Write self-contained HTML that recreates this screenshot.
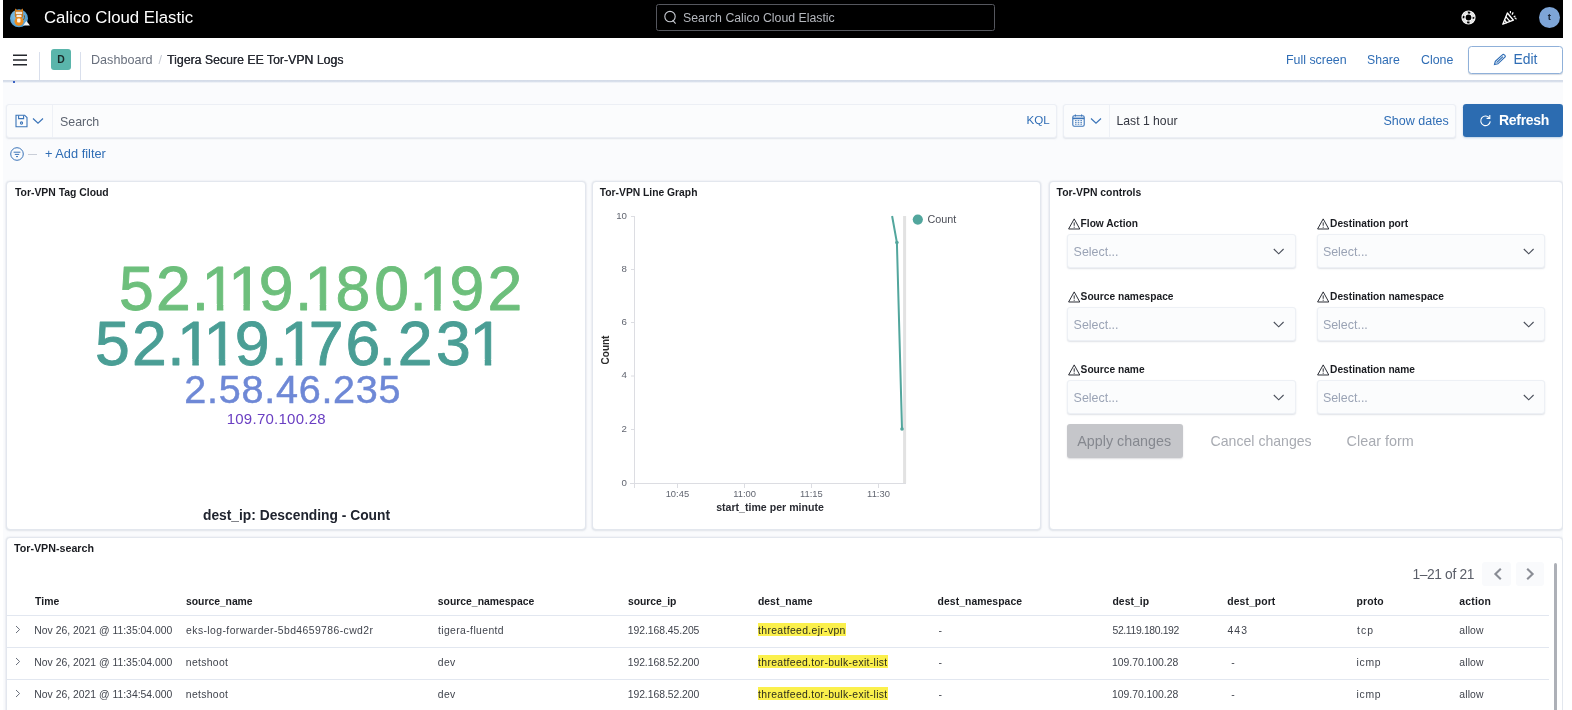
<!DOCTYPE html>
<html><head><meta charset="utf-8"><title>Tigera Secure EE Tor-VPN Logs</title>
<style>
*{box-sizing:border-box;margin:0;padding:0}
html,body{width:1572px;height:710px;overflow:hidden;background:#fff;font-family:"Liberation Sans",sans-serif;color:#343741}
#app{position:absolute;left:3px;top:0;width:1560px;height:710px;background:#fafbfd;overflow:hidden;will-change:transform}
.abs{position:absolute;white-space:nowrap;line-height:1}
.t{position:absolute;white-space:nowrap;line-height:1;transform:translateY(-50%)}
#top{position:absolute;left:0;top:0;width:1560px;height:38.5px;background:#000}
#bar2{position:absolute;left:0;top:38px;width:1560px;height:41.5px;background:#fff}
#band{position:absolute;left:0;top:79.5px;width:1560px;height:3.6px;background:linear-gradient(#d2dae7 0%,#d9e0ec 55%,#fafbfd 100%)}
.link{color:#2f6db5}
.panel{position:absolute;background:#fff;border:1px solid #e3e7ee;border-radius:4px;box-shadow:0 0 2px rgba(152,162,179,.28),0 1px 2px rgba(152,162,179,.18)}
.ptitle{position:absolute;left:8px;top:6px;font-size:10.4px;font-weight:bold;color:#1a1c21;white-space:nowrap;line-height:1}
.th{font-size:10.4px;font-weight:bold;color:#1a1c21}
.td{font-size:10.4px;color:#40444d}
.hl{color:#2c2c1c}
.sel{height:34px;background:#fbfcfd;border:1px solid #edf0f5;border-radius:3px;box-shadow:0 1px 1.5px rgba(152,162,179,.3)}
</style></head><body>
<div id="app">
<!-- TOP BLACK BAR -->
<div id="top">
  <svg class="abs" style="left:3px;top:4px" width="30" height="28" viewBox="6 4 30 28">
    <defs><radialGradient id="lg" cx="40%" cy="40%" r="65%"><stop offset="0" stop-color="#8cc6e8"/><stop offset="1" stop-color="#4a98cc"/></radialGradient></defs>
    <circle cx="19" cy="18.3" r="9" fill="url(#lg)"/>
    <path d="M14.8 12 L15.2 8.4 L17.2 10 H20.8 L22.8 8.4 L23.2 12 Z" fill="#d9801f"/>
    <rect x="14.8" y="10.5" width="8.4" height="7.4" rx="2" fill="#c9761c"/>
    <rect x="15.8" y="11.8" width="6.4" height="2.4" rx=".8" fill="#ece6dc"/>
    <rect x="16.4" y="14.9" width="5.2" height="2.4" rx=".8" fill="#f1ece4"/>
    <ellipse cx="19" cy="21.3" rx="4.5" ry="4.4" fill="#ee8d1e"/>
    <rect x="17.1" y="18.4" width="3.4" height="4" rx="1" fill="#fbf7ef"/>
    <path d="M23.4 20 q1.8 -2.4 1 -4.6" stroke="#7a5a2a" stroke-width="1" fill="none"/>
    <path d="M23 25.4 L26.4 20.9 L30 25.4 Z" fill="#f4f4f4"/>
  </svg>
  <div class="t" style="left:41px;top:18px;font-size:16.8px;color:#fff">Calico Cloud Elastic</div>
  <div class="abs" style="left:653px;top:4.2px;width:338.8px;height:27.2px;border:1px solid #55575e;border-radius:2.5px"></div>
  <svg class="abs" style="left:660px;top:10px" width="15" height="15" viewBox="0 0 15 15" fill="none" stroke="#c8cbd2" stroke-width="1.1"><circle cx="7" cy="6.6" r="5.2"/><path d="M9.6 10.2 L12.6 13.6"/></svg>
  <div class="t" style="left:680px;top:18px;font-size:12.3px;color:#b4b7bd">Search Calico Cloud Elastic</div>
  <svg class="abs" style="left:1456.5px;top:9.4px" width="17" height="17" viewBox="0 0 17 17" fill="none" stroke="#fff"><circle cx="8.5" cy="8.5" r="6.5" stroke-width="1.2"/><circle cx="8.5" cy="8.5" r="3.5" stroke-width="1.2"/><circle cx="8.5" cy="8.5" r="5" stroke-width="2.2" stroke-dasharray="5.4 2.45" stroke-dashoffset="-1.22" stroke-opacity=".9"/></svg>
  <svg class="abs" style="left:1497.8px;top:9px" width="18" height="18" viewBox="0 0 18 18" fill="none" stroke="#fff" stroke-width="1.35" stroke-linejoin="round"><path d="M6.4 4 L1.8 15.2 L12.4 11.2 Z"/><path d="M4.8 7.6 L9 12.4 M3.4 10.8 L6 14"/><path d="M9.4 2 L9.4 4.2 M12.2 3.4 L11 5.6 M14.4 7 L12.6 7.8 M15 10.4 q.2 -1.6 -1.6 -1.4" stroke-width="1.2"/></svg>
  <div class="abs" style="left:1535.9px;top:7.3px;width:21.2px;height:21.2px;border-radius:50%;background:#7ea5d7"></div>
  <div class="t" style="left:1544.8px;top:17.2px;font-size:9.8px;font-weight:bold;color:#1a2536">t</div>
</div>
<div id="band"></div>
<!-- SECOND BAR -->
<div id="bar2">
  <svg class="abs" style="left:10px;top:16px" width="14" height="12" viewBox="0 0 14 12" stroke="#24262d" stroke-width="1.4"><path d="M0 1.2H14M0 6H14M0 10.8H14"/></svg>
  <div class="abs" style="left:36px;top:14px;width:1px;height:28px;background:#d9dfec"></div>
  <div class="abs" style="left:77px;top:14px;width:1px;height:28px;background:#d9dfec"></div>
  <div class="abs" style="left:48px;top:11px;width:20px;height:21px;border-radius:3px;background:#5ab5ab"></div>
  <div class="t" style="left:54.2px;top:21.5px;font-size:10.4px;font-weight:bold;color:#1a2b2a">D</div>
  <div class="t" style="left:88px;top:21.5px;font-size:12.6px;color:#69707d">Dashboard</div>
  <div class="t" style="left:155.5px;top:21.5px;font-size:12.6px;color:#c2c7d1">/</div>
  <div class="t" style="left:164px;top:21.5px;font-size:12.3px;color:#2b2e36;text-shadow:0.3px 0 0 #2b2e36">Tigera Secure EE Tor-VPN Logs</div>
  <div class="t link" style="left:1283px;top:21.5px;font-size:12.4px">Full screen</div>
  <div class="t link" style="left:1364px;top:21.5px;font-size:12.25px">Share</div>
  <div class="t link" style="left:1418px;top:21.5px;font-size:12.4px">Clone</div>
  <div class="abs" style="left:1465px;top:8px;width:95px;height:28px;border:1px solid #8fb0d9;border-radius:3.5px;background:#fff;box-shadow:0 1px 1px rgba(120,135,160,.3)"></div>
  <svg class="abs" style="left:1490.4px;top:15px" width="13.8" height="13" viewBox="0 0 13 13" preserveAspectRatio="none" fill="none" stroke="#2f6db5" stroke-width="1.1"><path d="M1.4 11.6 L2.2 8.4 L8.8 1.8 a1.3 1.3 0 0 1 1.9 0 l.5 .5 a1.3 1.3 0 0 1 0 1.9 L4.6 10.8 Z"/><path d="M3.4 9.6 L9.4 3.6"/></svg>
  <div class="t link" style="left:1510.5px;top:21.5px;font-size:13.9px">Edit</div>
</div>
<div class="abs" style="left:10.2px;top:80.7px;width:1.8px;height:2.4px;background:#3b62c4"></div>

<!-- QUERY BAR -->
<div class="abs" style="left:3px;top:104px;width:1051px;height:34px;background:#fbfcfd;border:1px solid #eceff5;border-radius:3px;box-shadow:0 1px 1.5px rgba(152,162,179,.25)"></div>
<div class="abs" style="left:49px;top:105px;width:1px;height:32px;background:#eef1f6"></div>
<svg class="abs" style="left:12px;top:114px" width="13" height="14" viewBox="0 0 13 14" fill="none" stroke="#3b74b8" stroke-width="1.1"><path d="M1 1.2 H9.6 L12 3.6 V12.8 H1 Z"/><path d="M3.6 1.4 V4.6 H8.6 V1.4"/><circle cx="6.5" cy="9" r="1.1"/></svg>
<svg class="abs" style="left:29px;top:117px" width="12" height="8" viewBox="0 0 12 8" fill="none" stroke="#3b74b8" stroke-width="1.2"><path d="M1 1.5 L6 6.2 L11 1.5"/></svg>
<div class="t" style="left:57px;top:122px;font-size:12.4px;color:#5d6470">Search</div>
<div class="t link" style="left:1023.5px;top:120.4px;font-size:11.6px">KQL</div>
<div class="abs" style="left:1060px;top:104px;width:393px;height:34px;background:#fbfcfd;border:1px solid #eceff5;border-radius:3px;box-shadow:0 1px 1.5px rgba(152,162,179,.25)"></div>
<div class="abs" style="left:1106px;top:105px;width:1px;height:32px;background:#eef1f6"></div>
<svg class="abs" style="left:1069px;top:114px" width="13" height="13" viewBox="0 0 13 13" fill="none" stroke="#3b74b8" stroke-width="1.1"><rect x="0.8" y="1.8" width="11.4" height="10.4" rx="1.4"/><path d="M0.8 4.4 H12.2" stroke-width="1.6"/><path d="M3.4 0.4 V2.4 M9.6 0.4 V2.4"/><path d="M3 6.6 H10 M3 8.4 H10 M3 10.2 H10" stroke-width=".9" stroke-dasharray="1.6 1.1"/></svg>
<svg class="abs" style="left:1087px;top:117px" width="12" height="8" viewBox="0 0 12 8" fill="none" stroke="#3b74b8" stroke-width="1.2"><path d="M1 1.5 L6 6.2 L11 1.5"/></svg>
<div class="t" style="left:1113.5px;top:120.5px;font-size:12.2px;color:#343741">Last 1 hour</div>
<div class="t link" style="left:1380.5px;top:120.5px;font-size:12.5px">Show dates</div>
<div class="abs" style="left:1460.3px;top:103.5px;width:99.7px;height:33.5px;background:#2c6cb1;border-radius:3.2px;box-shadow:0 1px 2px rgba(44,108,177,.3)"></div>
<svg class="abs" style="left:1476px;top:114px" width="13" height="13" viewBox="0 0 13 13" fill="none" stroke="#fff" stroke-width="1.1"><path d="M10.6 4.2 A4.8 4.8 0 1 0 11.3 7.4"/><path d="M10.8 1 V4.4 H7.6"/></svg>
<div class="t" style="left:1496px;top:119.9px;font-size:14px;letter-spacing:-.3px;font-weight:bold;color:#fff">Refresh</div>
<!-- FILTER ROW -->
<svg class="abs" style="left:6.7px;top:147.2px" width="14" height="14" viewBox="0 0 14 14" fill="none" stroke="#3b74b8" stroke-width="1"><circle cx="7" cy="7" r="6.3"/><path d="M3.6 5.2 H10.4 M4.8 7.4 H9.2 M6 9.6 H8"/></svg>
<div class="abs" style="left:25px;top:153.5px;width:9px;height:1px;background:#c9ced8"></div>
<div class="t link" style="left:42px;top:154px;font-size:12.8px">+ Add filter</div>

<!-- PANEL 1 : TAG CLOUD -->
<div class="panel" style="left:3px;top:181px;width:579.6px;height:349px">
  <div class="ptitle">Tor-VPN Tag Cloud</div>
</div>
<svg class="abs" style="left:3px;top:200px" width="579" height="240" viewBox="6 200 579 240" font-family="Liberation Sans, sans-serif" font-size="62.5">
  <defs><clipPath id="nofoot"><path clip-rule="evenodd" d="M0 0H600V500H0Z M204.60 304.0H216.87V311.7H204.60Z M223.29 304.0H243.47V311.7H223.29Z M249.89 304.0H261.70V311.7H249.89Z M307.50 304.0H319.77V311.7H307.50Z M326.19 304.0H338.00V311.7H326.19Z M421.90 304.0H434.17V311.7H421.90Z M440.59 304.0H452.40V311.7H440.59Z M180.10 359.0H192.37V366.7H180.10Z M198.79 359.0H218.87V366.7H198.79Z M225.29 359.0H237.10V366.7H225.29Z M283.50 359.0H295.77V366.7H283.50Z M302.19 359.0H314.00V366.7H302.19Z M472.50 359.0H484.77V366.7H472.50Z M491.19 359.0H503.00V366.7H491.19Z"/></clipPath></defs>
  <g clip-path="url(#nofoot)" stroke-width="0.9" stroke-linejoin="round">
  <text y="310.2" fill="#6dbf7c" stroke="#6dbf7c" x="119.1 156.1 191.8 201.6 228.2 258.8 295.1 304.5 335.5 374.2 409.5 418.9 449.6 487.5">52.119.180.192</text>
  <text y="365.2" fill="#4a9e95" stroke="#4a9e95" x="95.0 132.0 167.2 177.1 203.6 234.7 270.6 280.5 308.8 345.4 378.6 397.8 436.0 469.5">52.119.176.231</text>
  </g>
</svg>
<div class="t" style="left:181.3px;top:390px;font-size:39.6px;letter-spacing:.72px;color:#6e88d6;-webkit-text-stroke:.5px #6e88d6">2.58.46.235</div>
<div class="t" style="left:223.7px;top:418px;font-size:15px;letter-spacing:.25px;color:#6a3fc2">109.70.100.28</div>
<div class="t" style="left:200px;top:516px;font-size:13.8px;font-weight:bold;color:#20242f">dest_ip: Descending - Count</div>

<!-- PANEL 2 : LINE GRAPH -->
<div class="panel" style="left:589px;top:181px;width:449px;height:349px">
  <div class="ptitle" style="left:6.8px;font-size:10.3px">Tor-VPN Line Graph</div>
</div>
<svg class="abs" style="left:589px;top:181px" width="449" height="349" viewBox="592 181 449 349" font-family="Liberation Sans, sans-serif">
  <g stroke="#dcdde2" stroke-width="1" fill="none">
    <path d="M634.5 216 V488 M630 483.5 H906"/>
    <path d="M631 216.5 H634 M631 269.5 H634 M631 322.5 H634 M631 376 H634 M631 429.5 H634"/>
    <path d="M677.5 483 V488 M744.5 483 V488 M811.5 483 V488 M878.5 483 V488"/>
  </g>
  <path d="M904.6 216 V483" stroke="#e2e2e2" stroke-width="3"/>
  <g font-size="9.7" fill="#626671" text-anchor="end">
    <text x="627" y="218.5">10</text><text x="627" y="271.7">8</text><text x="627" y="325">6</text><text x="627" y="378.3">4</text><text x="627" y="431.7">2</text><text x="627" y="485.6">0</text>
  </g>
  <g font-size="9.4" fill="#626671" text-anchor="middle">
    <text x="677.4" y="497.1">10:45</text><text x="744.6" y="497.1">11:00</text><text x="811.4" y="497.1">11:15</text><text x="878.5" y="497.1">11:30</text>
  </g>
  <text x="770" y="511.1" font-size="10.6" font-weight="bold" fill="#2a2c33" text-anchor="middle">start_time per minute</text>
  <text transform="translate(608.5 350) rotate(-90)" font-size="10" font-weight="bold" fill="#2b2b2b" text-anchor="middle">Count</text>
  <path d="M892.1 216 L896.9 242.6 L902 429" stroke="#52a69d" stroke-width="2" fill="none"/>
  <circle cx="896.9" cy="242.6" r="1.8" fill="#52a69d"/><circle cx="902" cy="429" r="1.8" fill="#52a69d"/>
  <circle cx="917.8" cy="219.6" r="5.1" fill="#52a69d"/>
  <text x="927.5" y="223.1" font-size="10.8" fill="#4b4e57">Count</text>
</svg>

<!-- PANEL 3 : CONTROLS -->
<div class="panel" style="left:1046px;top:181px;width:514.2px;height:349px">
  <div class="ptitle" style="font-size:10.4px;left:6.6px;top:5.7px">Tor-VPN controls</div>
</div>
<svg class="abs" style="left:1064.5px;top:218.4px" width="12.4" height="11.6" viewBox="0 0 12.4 11.6" fill="none" stroke="#2a2d35" stroke-width="1" stroke-linejoin="round"><path d="M6.2 0.9 L11.8 11 H0.6 Z"/><path d="M6.2 4.4 V7.8 M6.2 8.7 V9.8"/></svg>
<div class="t" style="left:1077.6px;top:224.1px;font-size:10.2px;font-weight:bold;color:#1a1c21">Flow Action</div>
<div class="abs sel" style="left:1064.4px;top:234.3px;width:228.2px"></div>
<div class="t" style="left:1070.6000000000001px;top:251.9px;font-size:12.45px;color:#9aa3b5">Select...</div>
<svg class="abs" style="left:1270.4px;top:248.3px" width="11.4" height="7" viewBox="0 0 11.4 7" fill="none" stroke="#4a4f5a" stroke-width="1.1"><path d="M0.8 1 L5.7 5.8 L10.6 1"/></svg>
<svg class="abs" style="left:1314.0px;top:218.4px" width="12.4" height="11.6" viewBox="0 0 12.4 11.6" fill="none" stroke="#2a2d35" stroke-width="1" stroke-linejoin="round"><path d="M6.2 0.9 L11.8 11 H0.6 Z"/><path d="M6.2 4.4 V7.8 M6.2 8.7 V9.8"/></svg>
<div class="t" style="left:1327.1px;top:224.1px;font-size:10.2px;font-weight:bold;color:#1a1c21">Destination port</div>
<div class="abs sel" style="left:1313.7px;top:234.3px;width:228.3px"></div>
<div class="t" style="left:1319.9px;top:251.9px;font-size:12.45px;color:#9aa3b5">Select...</div>
<svg class="abs" style="left:1519.8px;top:248.3px" width="11.4" height="7" viewBox="0 0 11.4 7" fill="none" stroke="#4a4f5a" stroke-width="1.1"><path d="M0.8 1 L5.7 5.8 L10.6 1"/></svg>
<svg class="abs" style="left:1064.5px;top:291.4px" width="12.4" height="11.6" viewBox="0 0 12.4 11.6" fill="none" stroke="#2a2d35" stroke-width="1" stroke-linejoin="round"><path d="M6.2 0.9 L11.8 11 H0.6 Z"/><path d="M6.2 4.4 V7.8 M6.2 8.7 V9.8"/></svg>
<div class="t" style="left:1077.6px;top:297.1px;font-size:10.2px;font-weight:bold;color:#1a1c21">Source namespace</div>
<div class="abs sel" style="left:1064.4px;top:307.3px;width:228.2px"></div>
<div class="t" style="left:1070.6000000000001px;top:324.90000000000003px;font-size:12.45px;color:#9aa3b5">Select...</div>
<svg class="abs" style="left:1270.4px;top:321.3px" width="11.4" height="7" viewBox="0 0 11.4 7" fill="none" stroke="#4a4f5a" stroke-width="1.1"><path d="M0.8 1 L5.7 5.8 L10.6 1"/></svg>
<svg class="abs" style="left:1314.0px;top:291.4px" width="12.4" height="11.6" viewBox="0 0 12.4 11.6" fill="none" stroke="#2a2d35" stroke-width="1" stroke-linejoin="round"><path d="M6.2 0.9 L11.8 11 H0.6 Z"/><path d="M6.2 4.4 V7.8 M6.2 8.7 V9.8"/></svg>
<div class="t" style="left:1327.1px;top:297.1px;font-size:10.2px;font-weight:bold;color:#1a1c21">Destination namespace</div>
<div class="abs sel" style="left:1313.7px;top:307.3px;width:228.3px"></div>
<div class="t" style="left:1319.9px;top:324.90000000000003px;font-size:12.45px;color:#9aa3b5">Select...</div>
<svg class="abs" style="left:1519.8px;top:321.3px" width="11.4" height="7" viewBox="0 0 11.4 7" fill="none" stroke="#4a4f5a" stroke-width="1.1"><path d="M0.8 1 L5.7 5.8 L10.6 1"/></svg>
<svg class="abs" style="left:1064.5px;top:364.4px" width="12.4" height="11.6" viewBox="0 0 12.4 11.6" fill="none" stroke="#2a2d35" stroke-width="1" stroke-linejoin="round"><path d="M6.2 0.9 L11.8 11 H0.6 Z"/><path d="M6.2 4.4 V7.8 M6.2 8.7 V9.8"/></svg>
<div class="t" style="left:1077.6px;top:370.1px;font-size:10.2px;font-weight:bold;color:#1a1c21">Source name</div>
<div class="abs sel" style="left:1064.4px;top:380.3px;width:228.2px"></div>
<div class="t" style="left:1070.6000000000001px;top:397.90000000000003px;font-size:12.45px;color:#9aa3b5">Select...</div>
<svg class="abs" style="left:1270.4px;top:394.3px" width="11.4" height="7" viewBox="0 0 11.4 7" fill="none" stroke="#4a4f5a" stroke-width="1.1"><path d="M0.8 1 L5.7 5.8 L10.6 1"/></svg>
<svg class="abs" style="left:1314.0px;top:364.4px" width="12.4" height="11.6" viewBox="0 0 12.4 11.6" fill="none" stroke="#2a2d35" stroke-width="1" stroke-linejoin="round"><path d="M6.2 0.9 L11.8 11 H0.6 Z"/><path d="M6.2 4.4 V7.8 M6.2 8.7 V9.8"/></svg>
<div class="t" style="left:1327.1px;top:370.1px;font-size:10.2px;font-weight:bold;color:#1a1c21">Destination name</div>
<div class="abs sel" style="left:1313.7px;top:380.3px;width:228.3px"></div>
<div class="t" style="left:1319.9px;top:397.90000000000003px;font-size:12.45px;color:#9aa3b5">Select...</div>
<svg class="abs" style="left:1519.8px;top:394.3px" width="11.4" height="7" viewBox="0 0 11.4 7" fill="none" stroke="#4a4f5a" stroke-width="1.1"><path d="M0.8 1 L5.7 5.8 L10.6 1"/></svg>
<div class="abs" style="left:1064px;top:424.3px;width:116.2px;height:33.4px;background:#c5c6ca;border-radius:3px;box-shadow:0 1px 1.5px rgba(120,120,130,.25)"></div>
<div class="t" style="left:1074.3px;top:441px;font-size:14.3px;color:#85888f">Apply changes</div>
<div class="t" style="left:1207.6px;top:441px;font-size:14.1px;color:#a8abb2">Cancel changes</div>
<div class="t" style="left:1343.6px;top:441px;font-size:14.4px;color:#a8abb2">Clear form</div>

<!-- PANEL 4 : TABLE -->
<div class="panel" style="left:3px;top:537px;width:1557px;height:200px">
  <div class="ptitle" style="font-size:10.7px;left:7px;top:4.7px">Tor-VPN-search</div>
</div>
<div class="t th" style="left:32.0px;top:601.8px;letter-spacing:0.08px">Time</div>
<div class="t th" style="left:183.1px;top:601.8px;letter-spacing:-0.05px">source_name</div>
<div class="t th" style="left:434.8px;top:601.8px">source_namespace</div>
<div class="t th" style="left:625.1px;top:601.8px;letter-spacing:-0.09px">source_ip</div>
<div class="t th" style="left:754.9px;top:601.8px;letter-spacing:0.05px">dest_name</div>
<div class="t th" style="left:934.6px;top:601.8px;letter-spacing:0.05px">dest_namespace</div>
<div class="t th" style="left:1109.5px;top:601.8px;letter-spacing:0.02px">dest_ip</div>
<div class="t th" style="left:1224.2px;top:601.8px;letter-spacing:0.10px">dest_port</div>
<div class="t th" style="left:1353.6px;top:601.8px;letter-spacing:0.14px">proto</div>
<div class="t th" style="left:1456.3px;top:601.8px;letter-spacing:0.19px">action</div>
<div class="abs" style="left:4px;top:615.0px;width:1541.5px;height:1px;background:#e2e7f0"></div>
<svg class="abs" style="left:11.9px;top:625.1px" width="6" height="9" viewBox="0 0 6 9" fill="none" stroke="#6a707c" stroke-width="1"><path d="M1 1 L4.6 4.5 L1 8"/></svg>
<div class="t td" style="left:31.3px;top:630.7px">Nov 26, 2021 @ 11:35:04.000</div>
<div class="t td" style="left:183.1px;top:630.7px;letter-spacing:0.41px">eks-log-forwarder-5bd4659786-cwd2r</div>
<div class="t td" style="left:435.0px;top:630.7px;letter-spacing:0.38px">tigera-fluentd</div>
<div class="t td" style="left:624.7px;top:630.7px;letter-spacing:-0.04px">192.168.45.205</div>
<div class="abs" style="left:754.8px;top:623.1px;width:88.1px;height:12.7px;background:#fbf04c"></div>
<div class="t td hl" style="left:755.1px;top:630.7px;letter-spacing:0.34px">threatfeed.ejr-vpn</div>
<div class="t td" style="left:935.5px;top:630.7px">-</div>
<div class="t td" style="left:1109.5px;top:630.7px;letter-spacing:-0.36px">52.119.180.192</div>
<div class="t td" style="left:1224.4px;top:630.7px;letter-spacing:1.10px">443</div>
<div class="t td" style="left:1354.1px;top:630.7px;letter-spacing:0.99px">tcp</div>
<div class="t td" style="left:1456.2px;top:630.7px;letter-spacing:0.18px">allow</div>
<div class="abs" style="left:4px;top:647.0px;width:1541.5px;height:1px;background:#e2e7f0"></div>
<svg class="abs" style="left:11.9px;top:657.1px" width="6" height="9" viewBox="0 0 6 9" fill="none" stroke="#6a707c" stroke-width="1"><path d="M1 1 L4.6 4.5 L1 8"/></svg>
<div class="t td" style="left:31.3px;top:662.7px">Nov 26, 2021 @ 11:35:04.000</div>
<div class="t td" style="left:182.8px;top:662.7px;letter-spacing:0.33px">netshoot</div>
<div class="t td" style="left:434.8px;top:662.7px;letter-spacing:0.34px">dev</div>
<div class="t td" style="left:624.7px;top:662.7px;letter-spacing:-0.05px">192.168.52.200</div>
<div class="abs" style="left:754.8px;top:655.1px;width:130.6px;height:12.7px;background:#fbf04c"></div>
<div class="t td hl" style="left:755.1px;top:662.7px;letter-spacing:0.32px">threatfeed.tor-bulk-exit-list</div>
<div class="t td" style="left:935.5px;top:662.7px">-</div>
<div class="t td" style="left:1109.1px;top:662.7px;letter-spacing:-0.03px">109.70.100.28</div>
<div class="t td" style="left:1228.2px;top:662.7px">-</div>
<div class="t td" style="left:1353.6px;top:662.7px;letter-spacing:0.65px">icmp</div>
<div class="t td" style="left:1456.2px;top:662.7px;letter-spacing:0.18px">allow</div>
<div class="abs" style="left:4px;top:679.0px;width:1541.5px;height:1px;background:#e2e7f0"></div>
<svg class="abs" style="left:11.9px;top:689.1px" width="6" height="9" viewBox="0 0 6 9" fill="none" stroke="#6a707c" stroke-width="1"><path d="M1 1 L4.6 4.5 L1 8"/></svg>
<div class="t td" style="left:31.3px;top:694.7px">Nov 26, 2021 @ 11:34:54.000</div>
<div class="t td" style="left:182.8px;top:694.7px;letter-spacing:0.33px">netshoot</div>
<div class="t td" style="left:434.8px;top:694.7px;letter-spacing:0.34px">dev</div>
<div class="t td" style="left:624.7px;top:694.7px;letter-spacing:-0.05px">192.168.52.200</div>
<div class="abs" style="left:754.8px;top:687.1px;width:130.6px;height:12.7px;background:#fbf04c"></div>
<div class="t td hl" style="left:755.1px;top:694.7px;letter-spacing:0.32px">threatfeed.tor-bulk-exit-list</div>
<div class="t td" style="left:935.5px;top:694.7px">-</div>
<div class="t td" style="left:1109.1px;top:694.7px;letter-spacing:-0.03px">109.70.100.28</div>
<div class="t td" style="left:1228.2px;top:694.7px">-</div>
<div class="t td" style="left:1353.6px;top:694.7px;letter-spacing:0.65px">icmp</div>
<div class="t td" style="left:1456.2px;top:694.7px;letter-spacing:0.18px">allow</div>
<div class="t" style="left:1409.4px;top:575px;font-size:13.8px;letter-spacing:-.36px;color:#5a5e68">1–21 of 21</div>
<div class="abs" style="left:1479px;top:562px;width:29.3px;height:24px;background:#f9fafc;border-radius:3px"></div>
<div class="abs" style="left:1512.8px;top:562px;width:28.5px;height:24px;background:#f9fafc;border-radius:3px"></div>
<svg class="abs" style="left:1489.5px;top:567.2px" width="10" height="14" viewBox="0 0 10 14" fill="none" stroke="#8a8d95" stroke-width="2.1"><path d="M7.8 1.8 L2.4 7 L7.8 12.2"/></svg>
<svg class="abs" style="left:1521.9px;top:567.2px" width="10" height="14" viewBox="0 0 10 14" fill="none" stroke="#8a8d95" stroke-width="2.1"><path d="M2.2 1.8 L7.6 7 L2.2 12.2"/></svg>
<div class="abs" style="left:1550.8px;top:563px;width:3.3px;height:150px;background:#adb0b7;border-radius:1.5px"></div>
</div>
</body></html>
